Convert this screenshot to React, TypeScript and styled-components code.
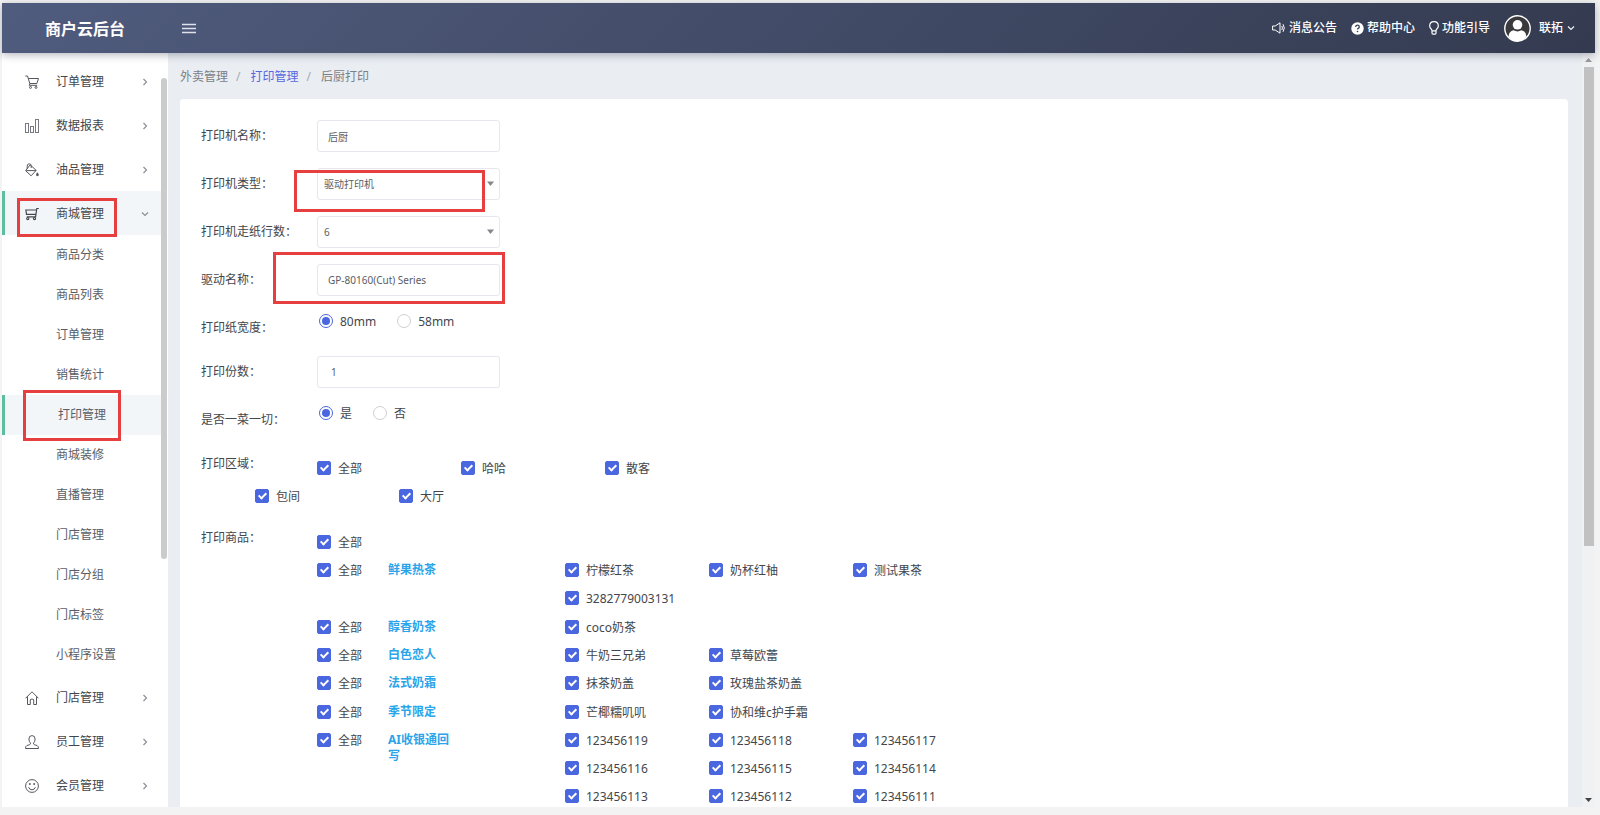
import React from "react";
import styled, { createGlobalStyle, css } from "styled-components";

const GlobalStyle = createGlobalStyle`
  *, *::before, *::after { box-sizing: border-box; }
  body {
    margin: 0;
    background: #f3f3f3;
    color: #43464c;
    font: 12px/16px "Noto Sans", "Noto Sans CJK SC", sans-serif;
  }
  button, input, select { font: inherit; color: inherit; margin: 0; }
  button { background: none; border: 0; padding: 0; cursor: pointer; }
  a { color: inherit; text-decoration: none; }
`;

const Frame = styled.div`
  height: 100vh;
  padding: 3px 5px 8px 2px;
  display: flex;
  flex-direction: column;
  overflow: hidden;
`;

const Header = styled.header`
  position: relative;
  z-index: 2;
  flex: 0 0 50px;
  display: flex;
  align-items: center;
  padding-right: 20px;
  color: #fff;
  background: linear-gradient(135deg, #505c7e 0%, #343b50 100%);
  box-shadow: 0 2px 8px rgba(40, 50, 70, 0.35);
`;

const Brand = styled.h1`
  margin: 0;
  width: 180px;
  padding: 2px 0 0 43px;
  font-size: 16px;
  line-height: 24px;
  font-weight: 700;
`;

const MenuToggle = styled.button`
  display: flex;
`;

const HeaderLinks = styled.nav`
  margin-left: auto;
  display: flex;
  align-items: center;
  gap: 14px;
  font-weight: 500;
`;

const HeaderLink = styled.a`
  display: flex;
  align-items: center;
  gap: 3px;
`;

const UserButton = styled.button`
  display: flex;
  align-items: center;
  gap: 8px;
  font-weight: 500;
`;

const UserName = styled.span`
  display: flex;
  align-items: center;
  gap: 4px;
`;

const Body = styled.div`
  flex: 1;
  min-height: 0;
  display: flex;
  background: #eaeef3;
`;

const Sidebar = styled.aside`
  flex: 0 0 166px;
  display: flex;
  background: #fff;
  overflow: hidden;
`;

const NavList = styled.nav`
  flex: 1;
  padding-top: 6px;
`;

const activeItem = css`
  background: #f3f6f9;
  border-left-color: #5cbd9f;
`;

const NavItem = styled.a<{ $active?: boolean }>`
  position: relative;
  height: 44px;
  display: flex;
  align-items: center;
  padding: 1px 12px 0 20px;
  border-left: 3px solid transparent;
  ${(p) => p.$active && activeItem}
`;

const NavText = styled.span`
  flex: 1;
  padding-left: 17px;
`;

const SubItem = styled.a<{ $active?: boolean }>`
  position: relative;
  height: 40px;
  display: flex;
  align-items: center;
  padding-left: ${(p) => (p.$active ? 53 : 51)}px;
  border-left: 3px solid transparent;
  color: #5a5d65;
  ${(p) => p.$active && activeItem}
`;

const Marker = styled.span<{ $x: number; $y: number; $w: number; $h: number }>`
  position: absolute;
  z-index: 1;
  left: ${(p) => p.$x}px;
  top: ${(p) => p.$y}px;
  width: ${(p) => p.$w}px;
  height: ${(p) => p.$h}px;
  border: 3px solid #e5403f;
  pointer-events: none;
`;

const SideRail = styled.div`
  flex: 0 0 7px;
  padding-top: 25px;
`;

const SideThumb = styled.div`
  width: 6px;
  height: 66%;
  border-radius: 3px;
  background: #cbcbcb;
`;

const Main = styled.main`
  flex: 1;
  min-width: 0;
  display: flex;
  flex-direction: column;
  padding: 0 14px 0 12px;
  overflow: hidden;
`;

const Crumbs = styled.nav`
  flex: 0 0 46px;
  display: flex;
  align-items: center;
  gap: 8px;
  padding-top: 2px;
  color: #7b7f86;
`;

const CrumbLink = styled.a`
  color: #5867dd;
  padding-left: 2px;
`;

const CrumbEnd = styled.span`
  padding-left: 2px;
`;

const Slash = styled.span`
  color: #a5a9b0;
`;

const Card = styled.form`
  flex: 1;
  min-height: 0;
  overflow: hidden;
  padding: 21px;
  background: #fff;
  border-radius: 4px 4px 0 0;
`;

const Rail = styled.div`
  flex: 0 0 13px;
  display: flex;
  flex-direction: column;
  align-items: center;
  background: #f0f1f3;
`;

const RailArrow = styled.button`
  height: 14px;
  display: flex;
  align-items: center;
  justify-content: center;
`;

const RailTrack = styled.div`
  flex: 1;
  width: 10px;
`;

const RailThumb = styled.div`
  height: 66%;
  background: #c1c1c1;
`;

const Row = styled.div<{ $gap?: number }>`
  display: grid;
  grid-template-columns: 116px 1fr;
  min-height: 32px;
  margin-bottom: ${(p) => p.$gap ?? 16}px;
`;

const RowLabel = styled.label`
  padding-top: 8px;
`;

const Control = styled.div`
  position: relative;
  width: 183px;
`;

const fieldBox = css`
  width: 100%;
  height: 32px;
  border: 1px solid #e6e8ed;
  border-radius: 3px;
  background: #fff;
  color: #5a5d65;
  font-size: 10px;
  outline: none;
`;

const TextInput = styled.input<{ $pad?: number }>`
  ${fieldBox}
  padding: 0 ${(p) => p.$pad ?? 10}px;
`;

const SelectInput = styled.select`
  ${fieldBox}
  appearance: none;
  padding: 0 20px 0 6px;
`;

const Caret = styled.svg`
  position: absolute;
  right: 6px;
  top: 13px;
  pointer-events: none;
`;

const RadioGroup = styled.div`
  display: flex;
  align-items: flex-start;
  gap: 21px;
  padding-left: 2px;
`;

const OptionLabel = styled.label`
  display: flex;
  align-items: center;
  gap: 7px;
  white-space: nowrap;
`;

const OptionText = styled.span`
  padding-top: 2px;
`;

const Radio = styled.input`
  appearance: none;
  width: 14px;
  height: 14px;
  border: 1px solid #cfcfd4;
  border-radius: 50%;
  display: grid;
  place-content: center;
  &:checked { border-color: #4a67e0; }
  &:checked::after {
    content: "";
    width: 8px;
    height: 8px;
    border-radius: 50%;
    background: #4a67e0;
  }
`;

const Checkbox = styled.input`
  appearance: none;
  flex: none;
  width: 14px;
  height: 14px;
  border: 1px solid #4a67e0;
  border-radius: 2px;
  display: grid;
  justify-content: center;
  padding-top: 1px;
  &:checked { background: #4a67e0; }
  &:checked::after {
    content: "";
    width: 5px;
    height: 8px;
    border: solid #fff;
    border-width: 0 2px 2px 0;
    transform: rotate(45deg);
  }
`;

const CheckCell = styled(OptionLabel)`
  height: 28px;
  width: 144px;
`;

const CheckLine = styled.div<{ $indent?: number }>`
  display: flex;
  flex-wrap: wrap;
  padding-left: ${(p) => p.$indent ?? 0}px;
`;

const Areas = styled.div`
  margin-bottom: 12px;
`;

const TopSpaced = styled.div`
  padding-top: 6px;
`;

const Group = styled.div`
  display: grid;
  grid-template-columns: 71px 177px 450px;
  &:nth-child(3n) { padding-top: 1px; }
`;

const Category = styled.strong`
  width: 64px;
  padding-top: 6px;
  color: #2aa4ea;
`;

const CartIcon = () => (
  <svg width="14" height="14" viewBox="0 0 14 14" fill="none" stroke="#55585f">
    <path d="M0.3 1h2.2l2.3 7.5h7.1l1.6-5H3.3M4.8 8.5l-.6 1.8h8" />
    <circle cx="5.5" cy="12.4" r="1" />
    <circle cx="11" cy="12.4" r="1" />
  </svg>
);
const BarsIcon = () => (
  <svg width="14" height="14" viewBox="0 0 14 14" fill="none" stroke="#777a80">
    <rect x="0.5" y="4.5" width="3" height="9" />
    <rect x="5.5" y="7.5" width="3" height="6" />
    <rect x="10.5" y="0.5" width="3" height="13" />
  </svg>
);
const PaintIcon = () => (
  <svg width="14" height="14" viewBox="0 0 14 14" fill="none" stroke="#55585f">
    <path d="M5.2 1.800l6 5.600-5.100 5.400-5.500-5.100zM1.2 7.600h9.800M2.200 5.800V3.200Q2.200.8 4.200.8T6.200 3v2" />
    <path d="M12.400 9.200q1.400 1.900 1.400 2.600a1.400 1.400 0 0 1-2.800 0q0-.7 1.400-2.600z" fill="#55585f" stroke="none" />
  </svg>
);
const TrolleyIcon = () => (
  <svg width="14" height="14" viewBox="0 0 14 14" fill="none" stroke="#44474d" strokeWidth="1.2">
    <path d="M13.800 1.500h-2L10.600 9.800H1.800M11.400 3H.9l.6 4.400h9.300" />
    <circle cx="2.800" cy="11.600" r="1.100" />
    <circle cx="9.500" cy="11.600" r="1.100" />
  </svg>
);
const HomeIcon = () => (
  <svg width="14" height="14" viewBox="0 0 14 14" fill="none" stroke="#55585f">
    <path d="M.5 7.300L7 .8l6.500 6.500M2.500 5.500v8h2.800V9q0-.8.700-.8h2q.7 0 .7.800v4.500h2.800v-8" />
  </svg>
);
const StaffIcon = () => (
  <svg width="14" height="14" viewBox="0 0 14 14" fill="none" stroke="#55585f">
    <path d="M5.500 8.200Q3.900 6.600 3.900 4q0-3.400 3.100-3.400T10.100 4q0 2.600-1.600 4.200-.3 1 .8 1.400l2.900 1q1.300.6 1.300 2.900h-13q0-2.300 1.300-2.900l2.900-1q1.100-.4.8-1.400z" />
  </svg>
);
const SmileIcon = () => (
  <svg width="14" height="14" viewBox="0 0 14 14" fill="none" stroke="#55585f">
    <circle cx="7" cy="7" r="6.400" />
    <path d="M3.600 8.200q.8 2.600 3.400 2.600t3.400-2.600" />
    <circle cx="4.800" cy="5" r=".6" fill="#55585f" />
    <circle cx="9.200" cy="5" r=".6" fill="#55585f" />
  </svg>
);
const Chevron = ({ down }: { down?: boolean }) => (
  <svg width="8" height="8" viewBox="0 0 8 8" fill="none" stroke="#8b8e94" strokeWidth="1.200">
    <path d={down ? "M1 2.500l3 3 3-3" : "M2.500 1l3 3-3 3"} />
  </svg>
);

const before = [
  { text: "订单管理", Icon: CartIcon },
  { text: "数据报表", Icon: BarsIcon },
  { text: "油品管理", Icon: PaintIcon },
];
const after = [
  { text: "门店管理", Icon: HomeIcon },
  { text: "员工管理", Icon: StaffIcon },
  { text: "会员管理", Icon: SmileIcon },
];
const subItems = [
  "商品分类", "商品列表", "订单管理", "销售统计", "打印管理", "商城装修",
  "直播管理", "门店管理", "门店分组", "门店标签", "小程序设置",
];
const groups = [
  { name: "鲜果热茶", items: ["柠檬红茶", "奶杯红柚", "测试果茶", "3282779003131"] },
  { name: "醇香奶茶", items: ["coco奶茶"] },
  { name: "白色恋人", items: ["牛奶三兄弟", "草莓欧蕾"] },
  { name: "法式奶霜", items: ["抹茶奶盖", "玫瑰盐茶奶盖"] },
  { name: "季节限定", items: ["芒椰糯叽叽", "协和维c护手霜"] },
  {
    name: "AI收银通回写",
    items: [
      "123456119", "123456118", "123456117", "123456116", "123456115",
      "123456114", "123456113", "123456112", "123456111",
    ],
  },
];

const Check = ({ text }: { text: string }) => (
  <CheckCell>
    <Checkbox type="checkbox" defaultChecked />
    <OptionText>{text}</OptionText>
  </CheckCell>
);

const RadioOption = ({ name, text, on }: { name: string; text: string; on?: boolean }) => (
  <OptionLabel>
    <Radio type="radio" name={name} defaultChecked={on} />
    <OptionText>{text}</OptionText>
  </OptionLabel>
);

const NavEntry = ({ text, Icon }: { text: string; Icon: React.FC }) => (
  <NavItem href="#">
    <Icon />
    <NavText>{text}</NavText>
    <Chevron />
  </NavItem>
);

const SelectCaret = () => (
  <Caret width="7" height="6" viewBox="0 0 7 6">
    <path d="M0 0.500h7L3.500 5z" fill="#85878c" />
  </Caret>
);

export default function App() {
  return (
    <Frame>
      <GlobalStyle />
      <Header>
        <Brand>商户云后台</Brand>
        <MenuToggle type="button" aria-label="菜单">
          <svg width="14" height="11" viewBox="0 0 14 11" stroke="#dfe2ea" strokeWidth="1.500">
            <path d="M0 1.500h14M0 5.500h14M0 9.500h14" />
          </svg>
        </MenuToggle>
        <HeaderLinks>
          <HeaderLink href="#">
            <svg width="14" height="12" viewBox="0 0 14 12" fill="none" stroke="#fff">
              <path d="M.6 4v4h2.600L8 11.200V.8L3.200 4zM9.800 4q1.200 2 0 4M11 2.200q2.600 3.800 0 7.600" />
            </svg>
            消息公告
          </HeaderLink>
          <HeaderLink href="#">
            <svg width="13" height="13" viewBox="0 0 13 13">
              <circle cx="6.500" cy="6.500" r="6.200" fill="#fff" />
              <path d="M4.700 5q0-1.800 1.800-1.800T8.300 4.900q0 .9-1.200 1.500-.6.300-.6 1.200" fill="none" stroke="#3b435b" strokeWidth="1.300" />
              <circle cx="6.500" cy="9.500" r=".8" fill="#3b435b" />
            </svg>
            帮助中心
          </HeaderLink>
          <HeaderLink href="#">
            <svg width="10" height="14" viewBox="0 0 10 14" fill="none" stroke="#fff" strokeWidth="1.200">
              <path d="M3 9.800Q3 8.600 2 7.700.7 6.500.7 4.900.7.700 5 .700t4.300 4.200q0 1.600-1.300 2.800-1 .9-1 2.100zM3 9.800v2.200q0 1.200 1 1.200h2q1 0 1-1.200V9.800" />
            </svg>
            功能引导
          </HeaderLink>
          <UserButton type="button">
            <svg width="27" height="27" viewBox="0 0 27 27">
              <circle cx="13.500" cy="13.500" r="12.700" fill="#3a3a3c" stroke="#fff" strokeWidth="1.400" />
              <circle cx="13.500" cy="9.800" r="4.800" fill="#fff" />
              <path d="M4.500 21.500q.5-5.300 5-6.200 4 2.200 8 0 4.500.9 5 6.200-3.500 4.700-9 4.700t-9-4.700z" fill="#fff" />
            </svg>
            <UserName>
              联拓
              <svg width="8" height="8" viewBox="0 0 8 8" fill="none" stroke="#f0f1f5" strokeWidth="1.200">
                <path d="M1 2.500l3 3 3-3" />
              </svg>
            </UserName>
          </UserButton>
        </HeaderLinks>
      </Header>
      <Body>
        <Sidebar>
          <NavList>
            {before.map((n) => <NavEntry key={n.text} {...n} />)}
            <NavItem href="#" $active>
              <TrolleyIcon />
              <NavText>商城管理</NavText>
              <Chevron down />
              <Marker $x={12} $y={7} $w={100} $h={39} />
            </NavItem>
            {subItems.map((text) => {
              const active = text === "打印管理";
              return (
                <SubItem href="#" key={text} $active={active}>
                  {text}
                  {active && <Marker $x={18} $y={-5} $w={98} $h={51} />}
                </SubItem>
              );
            })}
            {after.map((n) => <NavEntry key={n.text} {...n} />)}
          </NavList>
          <SideRail><SideThumb /></SideRail>
        </Sidebar>
        <Main>
          <Crumbs>
            <a href="#">外卖管理</a>
            <Slash>/</Slash>
            <CrumbLink href="#">打印管理</CrumbLink>
            <Slash>/</Slash>
            <CrumbEnd>后厨打印</CrumbEnd>
          </Crumbs>
          <Card>
            <Row>
              <RowLabel htmlFor="name">打印机名称：</RowLabel>
              <Control><TextInput id="name" defaultValue="后厨" /></Control>
            </Row>
            <Row>
              <RowLabel htmlFor="type">打印机类型：</RowLabel>
              <Control>
                <SelectInput id="type"><option>驱动打印机</option></SelectInput>
                <SelectCaret />
                <Marker $x={-23} $y={2} $w={191} $h={42} />
              </Control>
            </Row>
            <Row>
              <RowLabel htmlFor="lines">打印机走纸行数：</RowLabel>
              <Control>
                <SelectInput id="lines"><option>6</option></SelectInput>
                <SelectCaret />
              </Control>
            </Row>
            <Row>
              <RowLabel htmlFor="driver">驱动名称：</RowLabel>
              <Control>
                <TextInput id="driver" defaultValue="GP-80160(Cut) Series" />
                <Marker $x={-44} $y={-12} $w={232} $h={52} />
              </Control>
            </Row>
            <Row $gap={12}>
              <RowLabel as="span">打印纸宽度：</RowLabel>
              <RadioGroup>
                <RadioOption name="paper" text="80mm" on />
                <RadioOption name="paper" text="58mm" />
              </RadioGroup>
            </Row>
            <Row>
              <RowLabel htmlFor="copies">打印份数：</RowLabel>
              <Control><TextInput id="copies" $pad={13} defaultValue="1" /></Control>
            </Row>
            <Row $gap={12}>
              <RowLabel as="span">是否一菜一切：</RowLabel>
              <RadioGroup>
                <RadioOption name="cut" text="是" on />
                <RadioOption name="cut" text="否" />
              </RadioGroup>
            </Row>
            <Areas>
              <Row $gap={0}>
                <RowLabel as="span">打印区域：</RowLabel>
                <TopSpaced>
                  <CheckLine><Check text="全部" /><Check text="哈哈" /><Check text="散客" /></CheckLine>
                </TopSpaced>
              </Row>
              <CheckLine $indent={54}><Check text="包间" /><Check text="大厅" /></CheckLine>
            </Areas>
            <Row $gap={0}>
              <RowLabel as="span">打印商品：</RowLabel>
              <TopSpaced>
                <Check text="全部" />
                {groups.map((g) => (
                  <Group key={g.name}>
                    <Check text="全部" />
                    <Category>{g.name}</Category>
                    <CheckLine>{g.items.map((t) => <Check key={t} text={t} />)}</CheckLine>
                  </Group>
                ))}
              </TopSpaced>
            </Row>
          </Card>
        </Main>
        <Rail>
          <RailArrow type="button" aria-label="向上">
            <svg width="7" height="4" viewBox="0 0 7 4"><path d="M0 4h7L3.500 0z" fill="#9a9a9a" /></svg>
          </RailArrow>
          <RailTrack><RailThumb /></RailTrack>
          <RailArrow type="button" aria-label="向下">
            <svg width="7" height="4" viewBox="0 0 7 4"><path d="M0 0h7L3.500 4z" fill="#444" /></svg>
          </RailArrow>
        </Rail>
      </Body>
    </Frame>
  );
}
